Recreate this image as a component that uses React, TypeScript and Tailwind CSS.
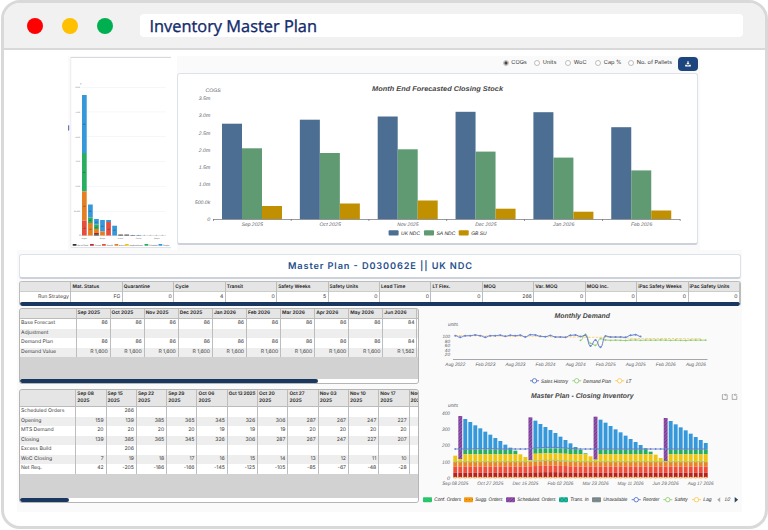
import React from "react";

const sans = "font-['Inter','Open_Sans',sans-serif]";

type TProps = {
  x: number;
  y: number;
  w?: number;
  s?: number;
  fill?: string;
  bold?: boolean;
  anchor?: "start" | "middle" | "end";
  children: string;
};

/* Italic chart label, stretched to width w when given. */
function T({ x, y, w, s = 5, fill = "#5a5c66", bold, anchor = "start", children }: TProps) {
  return (
    <text
      x={x}
      y={y}
      fontSize={s}
      fill={fill}
      textAnchor={anchor}
      fontStyle="italic"
      fontWeight={bold ? 700 : 400}
      fontFamily="'Liberation Sans', Arial, sans-serif"
      textLength={w}
      lengthAdjust="spacingAndGlyphs"
      textRendering="geometricPrecision"
    >
      {children}
    </text>
  );
}

/* ---------- Overview chart ---------- */
const BLUE = "#3498db";
const GREEN = "#27ae60";
const ORANGE = "#e67e22";
const RED = "#e74c3c";
const DARK = "#b22222";
const YELLOW = "#f1c40f";

const overview: [number, number, string][][] = [
  [[95, 153, BLUE], [153, 191.5, GREEN], [191.5, 220.5, ORANGE], [220.5, 235.5, RED]],
  [[204.5, 217.5, BLUE], [217.5, 223, GREEN], [223, 235.5, ORANGE]],
  [[219, 224.5, BLUE], [224.5, 229, GREEN], [229, 233, ORANGE], [233, 234.3, DARK], [234.3, 235.5, "#333"]],
  [[220, 231.5, BLUE], [231.5, 235.5, ORANGE]],
  [[220, 222, BLUE], [222, 235.5, RED]],
  [[225.7, 235.5, BLUE]],
  [[234.6, 235.5, "#333"]],
  [[234.6, 235.5, "#333"]],
  [[235, 235.5, "#555"]],
  [[235, 235.5, BLUE]],
];

function OverviewChart() {
  const grid = [87, 111.7, 136.5, 161.3, 186, 211];
  const names = ["60,000", "50,000", "40,000", "30,000", "20,000", "10,000"];
  const legend: [number, string, string][] = [
    [72.7, "#333", "Out of Stock"], [90, "#c0282d", "Critical"], [102, RED, "Shortfall"], [114.5, ORANGE, "Excess"],
    [125, YELLOW, "Replenishment"], [144.5, GREEN, "Scheduled"], [158.5, BLUE, "Surplus"],
  ];
  return (
    <svg width={103} height={194} viewBox="68 56 103 194" className="block shrink-0">
      <rect x={68} y={56} width={103} height={194} fill="#fafafa" />
      <rect x={71} y={57} width={100} height={190} fill="#fff" />
      <rect x={70.5} y={57} width={0.7} height={190} fill="#e4e6e9" />
      <rect x={71} y={57} width={100} height={1} fill="#d6d9df" />
      <rect x={71} y={247} width={100} height={0.8} fill="#d9dce1" />
      <rect x={68} y={125.3} width={1.2} height={5.2} fill="#6478b4" />
      <T x={80} y={84.5} s={2.4}>#</T>
      {grid.map((y, i) => (
        <g key={y}>
          <rect x={82} y={y} width={84} height={0.5} fill="#eceef2" />
          <T x={80} y={y + 1} s={2} w={i === 5 ? 6 : 4.4} anchor="end">{names[i]}</T>
        </g>
      ))}
      <T x={80.5} y={236.3} s={2.2} anchor="end">0</T>
      <rect x={81} y={235.5} width={85} height={0.4} fill="#b8bbc2" />
      {overview.map((bar, i) =>
        bar.map(([a, b, c], j) => (
          <g key={`${i}-${j}`}>
            <rect x={82 + i * 6.05} y={a} width={4.7} height={b - a} fill={c} />
            {b - a > 4.4 && <T x={84.3 + i * 6.05} y={(a + b) / 2 + 0.8} s={2} fill="#333" anchor="middle">{j % 2 ? "41" : "80"}</T>}
          </g>
        ))
      )}
      {[114, 120, 126, 132, 138, 144, 150, 156].map((x) => (
        <T key={x} x={x + 6.4} y={236.2} s={2} fill="#555" anchor="middle">0</T>
      ))}
      {["Region", "Europe", "France", "Germany", "Malaysia"].map((m, i) => (
        <T key={m} x={84.3 + i * 18.1} y={238.8} s={2} w={5.5} anchor="middle">{m}</T>
      ))}
      {legend.map(([x, c, n], i) => (
        <g key={n}>
          <rect x={x} y={243.9} width={3.8} height={1.9} rx={0.4} fill={c} />
          <T x={x + 4.6} y={245.6} s={2} fill="#333" w={i === 4 ? 13.5 : i === 0 ? 11 : i === 5 ? 8.5 : 6.3}>{n}</T>
        </g>
      ))}
    </svg>
  );
}

/* ---------- Closing stock chart ---------- */
const months: [string, number, number, number][] = [
  ["Sep 2025", 123.7, 148.3, 206],
  ["Oct 2025", 119.7, 153, 203.5],
  ["Nov 2025", 116.5, 149.3, 200.5],
  ["Dec 2025", 111.8, 151.6, 208.7],
  ["Jan 2026", 112.2, 157.6, 211.7],
  ["Feb 2026", 127.2, 170.4, 210.5],
];

function StockChart() {
  const ticks = ["0", "500.0k", "1.0m", "1.5m", "2.0m", "2.5m", "3.0m", "3.5m"];
  return (
    <svg width={519} height={170} viewBox="178 74 519 170" className="block">
      <T x={437.5} y={91.2} s={6.9} w={131} bold anchor="middle" fill="#464646">Month End Forecasted Closing Stock</T>
      <T x={213.2} y={92.3} s={5} w={15.3} anchor="middle">COGS</T>
      {ticks.map((t, i) => (
        <T key={t} x={210.3} y={220.9 - i * 17.25} s={5} w={t === "0" ? 3 : i === 1 ? 15.5 : 11.5} anchor="end">{t}</T>
      ))}
      {months.map(([m, a, b, c], i) => {
        const x = 222 + i * 77.85;
        return (
          <g key={m}>
            <rect x={x} y={a} width={20} height={219.2 - a} fill="#4b6e92" />
            <rect x={x + 20} y={b} width={20} height={219.2 - b} fill="#5f9a72" />
            <rect x={x + 40} y={c} width={20} height={219.2 - c} fill="#c09000" />
            <T x={x + 30.3} y={225.9} s={5} w={21.3} anchor="middle">{m}</T>
          </g>
        );
      })}
      <rect x={213} y={219} width={467} height={0.7} fill="#6e7079" />
      {[0, 1, 2, 3, 4, 5, 6].map((i) => (
        <rect key={i} x={213 + i * 77.8} y={219} width={0.7} height={2} fill="#6e7079" />
      ))}
      {([[388.6, "#4b6e92", "UK NDC", 18.9], [424, "#5f9a72", "SA NDC", 18.9], [458.7, "#c09000", "GB SU", 15.5]] as [number, string, string, number][]).map(([x, c, n, w]) => (
        <g key={n}>
          <rect x={x} y={230.3} width={10} height={5.2} rx={0.9} fill={c} />
          <T x={x + 12.5} y={234.7} s={5} w={w} fill="#222">{n}</T>
        </g>
      ))}
    </svg>
  );
}

function Radio({ label, on, w }: { label: string; on?: boolean; w: string }) {
  return (
    <span className={`flex items-center gap-[2.5px] ${w}`}>
      <svg width={6} height={6} viewBox="0 0 6 6" className="block shrink-0">
        <circle cx={3} cy={3} r={2.5} fill="#fff" stroke="#808080" strokeWidth={0.5} />
        {on && <circle cx={3} cy={3} r={1.7} fill="#444" />}
      </svg>
      <span className="whitespace-nowrap">{label}</span>
    </span>
  );
}

/* ---------- Tables ---------- */
function Bar({ w }: { w: string }) {
  return (
    <div className="h-[4px] shrink-0 bg-white">
      <div className={`h-[4px] rounded-full bg-[#19375f] ${w}`} />
    </div>
  );
}

const line = "border-r-[0.8px] border-[#bdbdbd]";

function StrategyTable() {
  const head = ["", "Mat. Status", "Quarantine", "Cycle", "Transit", "Safety Weeks", "Safety Units", "Lead Time", "LT Flex.", "MOQ", "Var. MOQ", "MOQ Inc.", "iPac Safety Weeks", "iPac Safety Units"];
  const row = ["Run Strategy", "FG", "0", "4", "0", "5", "0", "0", "0", "266", "0", "0", "0", "0"];
  return (
    <div className="flex h-[25px] w-[722px] flex-col overflow-hidden rounded-[3px] border-x border-t border-[#bdbdbd]">
      <div className="grid h-[10px] grid-cols-14 border-b border-[#ccc] bg-[#e5e5e5] font-bold text-[#333]">
        {head.map((h, i) => (
          <div key={i} className={`${line} whitespace-nowrap pl-[1px] text-[4.8px] leading-[10px]`}>{h}</div>
        ))}
      </div>
      <div className="grid h-[10px] grid-cols-14 bg-white text-right">
        {row.map((h, i) => (
          <div key={i} className={`${line} pr-[1.5px] leading-[10px]`}>{h}</div>
        ))}
      </div>
      <Bar w="w-full" />
    </div>
  );
}

function DemandTable() {
  const head = ["", "Sep 2025", "Oct 2025", "Nov 2025", "Dec 2025", "Jan 2026", "Feb 2026", "Mar 2026", "Apr 2026", "May 2026", "Jun 2026"];
  const plan = [...Array(9).fill("86"), "84"];
  const rows = [
    ["Base Forecast", ...plan],
    ["Adjustment", ...Array(10).fill("")],
    ["Demand Plan", ...plan],
    ["Demand Value", ...Array(9).fill("R 1,600"), "R 1,562"],
  ];
  const cols = "grid grid-cols-[56.5px_repeat(10,34.1px)]";
  return (
    <div className="flex h-[76px] w-[400px] flex-col overflow-hidden rounded-[3px] border border-[#b5b5b5] bg-[#d2d2d2]">
      <div className={`${cols} h-[10px] border-b border-[#bbb] bg-[#e5e5e5] font-bold text-[#333]`}>
        {head.map((h, i) => (
          <div key={i} className={`${line} whitespace-nowrap pl-[1px] text-[4.8px] leading-[9.5px]`}>{h}</div>
        ))}
      </div>
      {rows.map((r, k) => (
        <div key={k} className={`${cols} h-[9.5px] shrink-0 text-right ${k % 2 ? "bg-[#eeeeee]" : "bg-white"}`}>
          {r.map((c, i) => (
            <div key={i} className={`${line} pr-[2px] pl-[1px] leading-[9.5px] ${i ? "tracking-[-0.05px]" : "text-left"}`}>{c}</div>
          ))}
        </div>
      ))}
      <div className="flex-1" />
      <Bar w="w-[298px]" />
    </div>
  );
}

function WeekTable() {
  const head = ["", "Sep 08 2025", "Sep 15 2025", "Sep 22 2025", "Sep 29 2025", "Oct 06 2025", "Oct 13 2025", "Oct 20 2025", "Oct 27 2025", "Nov 03 2025", "Nov 10 2025", "Nov 17 2025", "Nov 24 2025"];
  const rows: string[][] = [
    ["Scheduled Orders", "", "266", "", "", "", "", "", "", "", "", "", ""],
    ["Opening", "159", "139", "385", "365", "345", "326", "306", "287", "267", "247", "227", ""],
    ["MTS Demand", "20", "20", "20", "20", "19", "19", "19", "20", "20", "20", "20", ""],
    ["Closing", "139", "385", "365", "345", "326", "306", "287", "267", "247", "227", "207", ""],
    ["Excess Build", "", "206", "", "", "", "", "", "", "", "", "", ""],
    ["WoC Closing", "7", "19", "18", "17", "16", "15", "14", "13", "12", "11", "10", ""],
    ["Net Req.", "42", "-205", "-186", "-166", "-145", "-125", "-105", "-85", "-67", "-48", "-28", ""],
  ];
  const cols = "grid w-[430px] shrink-0 grid-cols-[56.3px_repeat(12,30.3px)]";
  return (
    <div className="flex h-[114px] w-[400px] flex-col overflow-hidden rounded-[3px] border border-[#b5b5b5] bg-[#d2d2d2]">
      <div className={`${cols} h-[17px] border-b border-[#bbb] bg-[#e5e5e5] font-bold text-[#333]`}>
        {head.map((h, i) => (
          <div key={i} className={`${line} pt-[1px] pl-[1px] text-[4.8px] leading-[6.7px]`}>
            {i === 6 ? (
              <span className="whitespace-nowrap text-[4.7px] tracking-[-0.08px]">{h}</span>
            ) : (
              <>
                <div className="whitespace-nowrap">{h.slice(0, 6)}</div>
                <div>{h.slice(7)}</div>
              </>
            )}
          </div>
        ))}
      </div>
      {rows.map((r, k) => (
        <div key={k} className={`${cols} h-[9.5px] text-right ${k % 2 ? "bg-[#eeeeee]" : "bg-white"}`}>
          {r.map((c, i) => (
            <div key={i} className={`${line} pr-[2px] pl-[1px] leading-[9.5px] ${i ? "" : "whitespace-nowrap text-left"}`}>{c}</div>
          ))}
        </div>
      ))}
      <div className="flex-1" />
      <Bar w="w-[49px]" />
    </div>
  );
}

/* ---------- Right-hand charts ---------- */
type P = [number, number];

function smooth(pts: P[]) {
  let d = `M${pts[0][0]} ${pts[0][1]}`;
  for (let i = 0; i < pts.length - 1; i++) {
    const a = pts[i];
    const b = pts[i + 1];
    const m = (a[0] + b[0]) / 2;
    d += `C${m} ${a[1]} ${m} ${b[1]} ${b[0]} ${b[1]}`;
  }
  return d;
}

const STEP = 5.01;
const at = (start: number, ys: number[]): P[] => ys.map((v, i) => [455.2 + (start + i) * STEP, 300 + v / 3]);

const sales = at(0, [107, 112, 107.5, 107, 105, 107, 112, 107, 107, 105.5, 109, 106, 107, 105.5, 111, 104, 105, 109, 110, 106.5, 111, 111, 112, 106, 105, 109.5, 106, 138, 120, 142, 108, 111, 111, 111, 112, 106, 104, 109.5]);
const demand = at(25, [121, 103, 130, 136, 116, 120, 121, 120.5, 121, 121.5, 120.5, 120, 121, 120.5, 120.5, 120.5, 120, 120.5, 121, 120.5, 121, 121.5, 120.5, 120.5, 120.5, 120.5]);
const lt = at(0, [107, 106.5, 107, 107, 107, 107.5, 108, 108, 108, 108.5, 109, 109, 109, 109, 109, 109, 109, 110, 110, 110.5, 111, 111, 111, 111, 111, 111, 112, 112, 112, 112, 112, 112, 112.5, 113, 113.5, 115, 115.5, 115.5, 115.5, 115.5, 115.5, 115.5, 115.5, 115.5, 115.5, 115.5, 116, 116, 116, 116]);

function LineKey({ x, y, c }: { x: number; y: number; c: string }) {
  return (
    <g stroke={c} strokeWidth={0.9}>
      <line x1={x} y1={y} x2={x + 9} y2={y} />
      <circle cx={x + 4.5} cy={y} r={2.2} fill="#fff" />
    </g>
  );
}

function MonthlyChart() {
  const labels = ["Aug 2022", "Feb 2023", "Aug 2023", "Feb 2024", "Aug 2024", "Feb 2025", "Aug 2025", "Feb 2026", "Aug 2026"];
  return (
    <svg width={323} height={80} viewBox="419 308 323 80" className="block">
      <T x={582.3} y={317.7} s={6.9} w={55.5} bold anchor="middle" fill="#464646">Monthly Demand</T>
      <T x={448} y={326} s={5} w={10}>units</T>
      {["20", "40", "60", "80", "100"].map((t, i) => (
        <T key={t} x={450} y={356.4 - i * 4.55} s={4.6} w={i === 4 ? 7.5 : 5.2} anchor="end">{t}</T>
      ))}
      <rect x={453} y={359.2} width={254.5} height={0.6} fill="#6e7079" />
      {labels.map((l, i) => (
        <T key={l} x={455.3 + i * 30.07} y={365.8} s={4.9} w={19.9} anchor="middle">{l}</T>
      ))}
      <path d={smooth(lt)} fill="none" stroke="#fac858" strokeWidth={0.8} strokeDasharray="2.6 1.2" />
      <path d={smooth(demand)} fill="none" stroke="#91cc75" strokeWidth={0.9} />
      {demand.map(([x, y]) => <circle key={x} cx={x} cy={y} r={0.95} fill="#91cc75" />)}
      <path d={smooth(sales)} fill="none" stroke="#5470c6" strokeWidth={0.9} />
      {sales.map(([x, y]) => <circle key={x} cx={x} cy={y} r={1} fill="#6c85d2" />)}
      <LineKey x={530} y={380.8} c="#5470c6" />
      <T x={541} y={382.5} s={5} w={27} fill="#222">Sales History</T>
      <LineKey x={572.2} y={380.8} c="#91cc75" />
      <T x={583.3} y={382.5} s={5} w={27.7} fill="#222">Demand Plan</T>
      <LineKey x={615.2} y={380.8} c="#fac858" />
      <T x={626.3} y={382.5} s={5} w={5} fill="#222">LT</T>
    </svg>
  );
}

/* Bar tops, in thirds of a pixel above the chart's 385 line. */
const tops = [212, 93, 102, 111, 121, 130, 140, 149, 159, 168, 179, 188, 197, 208, 216, 97, 107, 117, 126, 135, 144, 155, 165, 175, 186, 194, 205, 214, 95, 104, 113, 123, 133, 142, 152, 162, 171, 180, 190, 200, 209, 219, 99, 108, 118, 127, 136, 146, 156, 165, 174];
const humps = [0.3, 0.6, 0.8, 1, 1, 1, 0.8, 0.6, 0.3, 0.1];
const hump = (i: number) => (i >= 15 && i < 25 ? humps[i - 15] : 0);
const rest: Record<number, number> = { 1: 222, 15: 226, 28: 224, 42: 228 };
const Y = (v: number) => 385 + v / 3;

function InventoryChart() {
  const labels = ["Sep 08 2025", "Oct 27 2025", "Dec 15 2025", "Feb 02 2026", "Mar 23 2026", "May 11 2026", "Jun 29 2026", "Aug 17 2026"];
  const reorder: P[] = tops.map((_, i) => [455.2 + i * STEP, Y(192 - hump(i) * 5 - (i > 3 && i < 9 ? 1 : 0))]);
  const safety: P[] = tops.map((_, i) => [455.2 + i * STEP, Y(230 - hump(i) * 4)]);
  const keys: [number, string, number, string][] = [
    [423, "Conf. Orders", 26.7, "conf"], [464, "Sugg. Orders", 27.3, "sugg"], [506, "Scheduled. Orders", 38.3, "sched"],
    [559, "Trans. In", 18.3, "trans"], [592, "Unavailable", 24, "un"],
  ];
  const lineKeys: [number, string, number, string][] = [
    [631.7, "Reorder", 16.3, "#5470c6"], [663.3, "Safety", 13, "#91cc75"], [692, "Lag", 8.3, "#fac858"],
  ];
  return (
    <svg width={323} height={119} viewBox="419 388 323 119" className="block">
      <defs>
        <pattern id="sched" width="2.4" height="2.4" patternUnits="userSpaceOnUse" patternTransform="rotate(45)">
          <rect width="2.4" height="2.4" fill="#9354b0" />
          <rect width="0.9" height="2.4" fill="#713a8b" />
        </pattern>
        <pattern id="conf" width="2.2" height="2.2" patternUnits="userSpaceOnUse" patternTransform="rotate(-55)">
          <rect width="2.2" height="2.2" fill="#2ecc71" />
          <rect width="0.5" height="2.2" fill="#1fae5c" />
        </pattern>
        <pattern id="sugg" width="3" height="3" patternUnits="userSpaceOnUse">
          <rect width="3" height="3" fill="#f39c12" />
          <circle cx="1.5" cy="1.5" r="0.6" fill="#c56a10" />
        </pattern>
        <pattern id="trans" width="4" height="4" patternUnits="userSpaceOnUse">
          <rect width="4" height="4" fill="#1abc9c" />
          <path d="M0 0L4 4M4 0L0 4" stroke="#118a72" strokeWidth="0.6" />
        </pattern>
        <pattern id="un" width="2" height="2" patternUnits="userSpaceOnUse">
          <rect width="2" height="2" fill="#7f8c8d" />
          <rect width="2" height="0.4" fill="#6d7a7b" />
        </pattern>
      </defs>
      <T x={582.3} y={398.3} s={6.9} w={102.5} bold anchor="middle" fill="#464646">Master Plan - Closing Inventory</T>
      <g fill="none" stroke="#777" strokeWidth={0.6}>
        <path d="M723.4 394.6h-1v4.8h4.8v-3.6M724.6 394.8h2.6v1M725.6 393.7l-1.1 1.1 1.1 1.1" />
        <path d="M733.2 394.6h-1v4.8h4.6v-3.6M734.4 394.8h2.8M735.4 393.7l-1.1 1.1 1.1 1.1" />
      </g>
      <T x={448} y={406.8} s={5} w={10}>units</T>
      {["0", "100", "200", "300", "400"].map((t, i) => (
        <T key={t} x={450} y={479.6 - i * 16.1} s={5} w={i ? 7.9 : 3} anchor="end">{t}</T>
      ))}
      {tops.map((t, i) => {
        const x = 453.3 + i * STEP;
        const h = hump(i) * 3;
        const total = rest[i] ?? t;
        const layers: [number, string][] = [[193 - h, BLUE], [208 - h, GREEN], [231 - h, YELLOW], [245 - h, "#e98325"], [263 - h / 2, "#f04e3a"]];
        const stack: [number, number, string][] = [];
        if (rest[i]) stack.push([t, total, "url(#sched)"]);
        let top = total;
        for (const [b, c] of layers) {
          if (top < b) {
            stack.push([top, b, c]);
            top = b;
          }
        }
        stack.push([top, 278, "#b7221f"]);
        return stack.map(([a, b, c]) => <rect key={`${i}-${a}`} x={x} y={Y(a)} width={3.9} height={(b - a) / 3} fill={c} />);
      })}
      <path d={smooth(reorder)} fill="none" stroke="#5470c6" strokeWidth={0.8} />
      {reorder.map(([x, y]) => <circle key={x} cx={x} cy={y} r={0.9} fill="#6c85d2" />)}
      <path d={smooth(safety)} fill="none" stroke="#91cc75" strokeWidth={0.8} />
      {safety.map(([x, y]) => <circle key={x} cx={x} cy={y} r={0.9} fill="#a9d66c" />)}
      <path d="M453 477.7H707" stroke="#fac858" strokeWidth={0.7} />
      {safety.map(([x]) => <circle key={x} cx={x} cy={477.7} r={0.8} fill="#fff" stroke="#f5a83c" strokeWidth={0.5} />)}
      {labels.map((l, i) => (
        <T key={l} x={455.3 + i * 35.05} y={484.8} s={4.9} w={26} anchor="middle">{l}</T>
      ))}
      {keys.map(([x, n, w, p]) => (
        <g key={n}>
          <rect x={x} y={497.2} width={9} height={5} rx={0.9} fill={`url(#${p})`} />
          <T x={x + 11.3} y={501.4} s={5} w={w} fill="#222">{n}</T>
        </g>
      ))}
      {lineKeys.map(([x, n, w, c]) => (
        <g key={n}>
          <LineKey x={x} y={499.7} c={c} />
          <T x={x + 11.3} y={501.4} s={5} w={w} fill="#222">{n}</T>
        </g>
      ))}
      <path d="M720.2 497.2v5l-3-2.5z" fill="#aaa" />
      <T x={724.5} y={501.4} s={5} w={6} fill="#222">1/2</T>
      <path d="M734.7 497v5.4l3.4-2.7z" fill="#2f4554" />
    </svg>
  );
}

export default function App() {
  return (
    <div className={`h-[530px] w-[768px] overflow-hidden bg-white pl-px [text-rendering:geometricPrecision] ${sans}`}>
      <div className="flex h-[529px] w-[767px] flex-col overflow-hidden rounded-[19px] border-[3px] border-[#d9d9d9] bg-white">
        <header className="flex h-[47px] shrink-0 items-center border-b-2 border-[#d9d9d9] bg-[#f1f1f1] pl-[22.5px]">
          <span className="size-4 rounded-full bg-[#ff0000]" />
          <span className="ml-[19px] size-4 rounded-full bg-[#ffc000]" />
          <span className="ml-[19px] size-4 rounded-full bg-[#00b050]" />
          <div className="ml-[27.5px] flex h-[23px] w-[603px] items-center rounded-[4px] bg-white pl-[9px]">
            <svg width={180} height={22} className="block">
              <text x={0.5} y={16.5} fontSize={16.4} textLength={167.5} lengthAdjust="spacingAndGlyphs" fill="#12296b" stroke="#12296b" strokeWidth={0.35} fontFamily="'Open Sans', 'Noto Sans', sans-serif">
                Inventory Master Plan
              </text>
            </svg>
          </div>
        </header>

        <main className="pt-[6px] pl-[13px] text-[#3c3c3c] text-[5.1px]">
          <section className="ml-[51px] flex h-[194px] gap-[6px]">
            <OverviewChart />
            <div className="flex w-[523px] flex-col bg-[#fafafa]">
              <div className="flex h-[16px] shrink-0 items-center pb-[1px] pl-[325.8px] text-[5.6px] text-[#333]">
                <Radio label="COGs" on w="w-[31.5px]" />
                <Radio label="Units" w="w-[31px]" />
                <Radio label="WoC" w="w-[30px]" />
                <Radio label="Cap %" w="w-[33px]" />
                <Radio label="No. of Pallets" w="w-[50px]" />
                <button className="flex h-[14px] w-[20px] shrink-0 items-center justify-center rounded-[4px] bg-[#1d467e]">
                  <svg width={6} height={6} viewBox="0 0 6 6" className="block">
                    <path d="M2.4 .3h1.2v1.7h1L3 3.7 1.4 2h1zM.2 3.7h1.5L3 4.8l1.3-1.1h1.5v1.8H.2z" fill="#fff" />
                  </svg>
                </button>
              </div>
              <div className="mt-px h-[172px] w-[521px] rounded-[3px] border border-b-2 border-[#dde1e8] border-b-[#ccd1da] bg-white">
                <StockChart />
              </div>
            </div>
          </section>

          <section className="w-[725px] bg-[#fafafa] pt-[4px] pb-[5px] pl-[2px]">
            <h1 className="mb-[2px] flex h-[25px] w-[722px] items-center justify-center rounded-[3px] border border-b-2 border-[#dde1e8] border-b-[#ccd1da] bg-white">
              <svg width={186} height={14} className="block">
                <text x={1} y={10.4} fontSize={9.2} fontWeight={600} textLength={184} lengthAdjust="spacing" fill="#24508c" fontFamily="Inter, sans-serif">
                  Master Plan - D030062E || UK NDC
                </text>
              </svg>
            </h1>
            <StrategyTable />
            <div className="mt-[2px] flex">
              <div className="flex w-[400px] shrink-0 flex-col gap-[5px]">
                <DemandTable />
                <WeekTable />
              </div>
              <div className="flex flex-col">
                <MonthlyChart />
                <InventoryChart />
              </div>
            </div>
          </section>
        </main>
      </div>
    </div>
  );
}
